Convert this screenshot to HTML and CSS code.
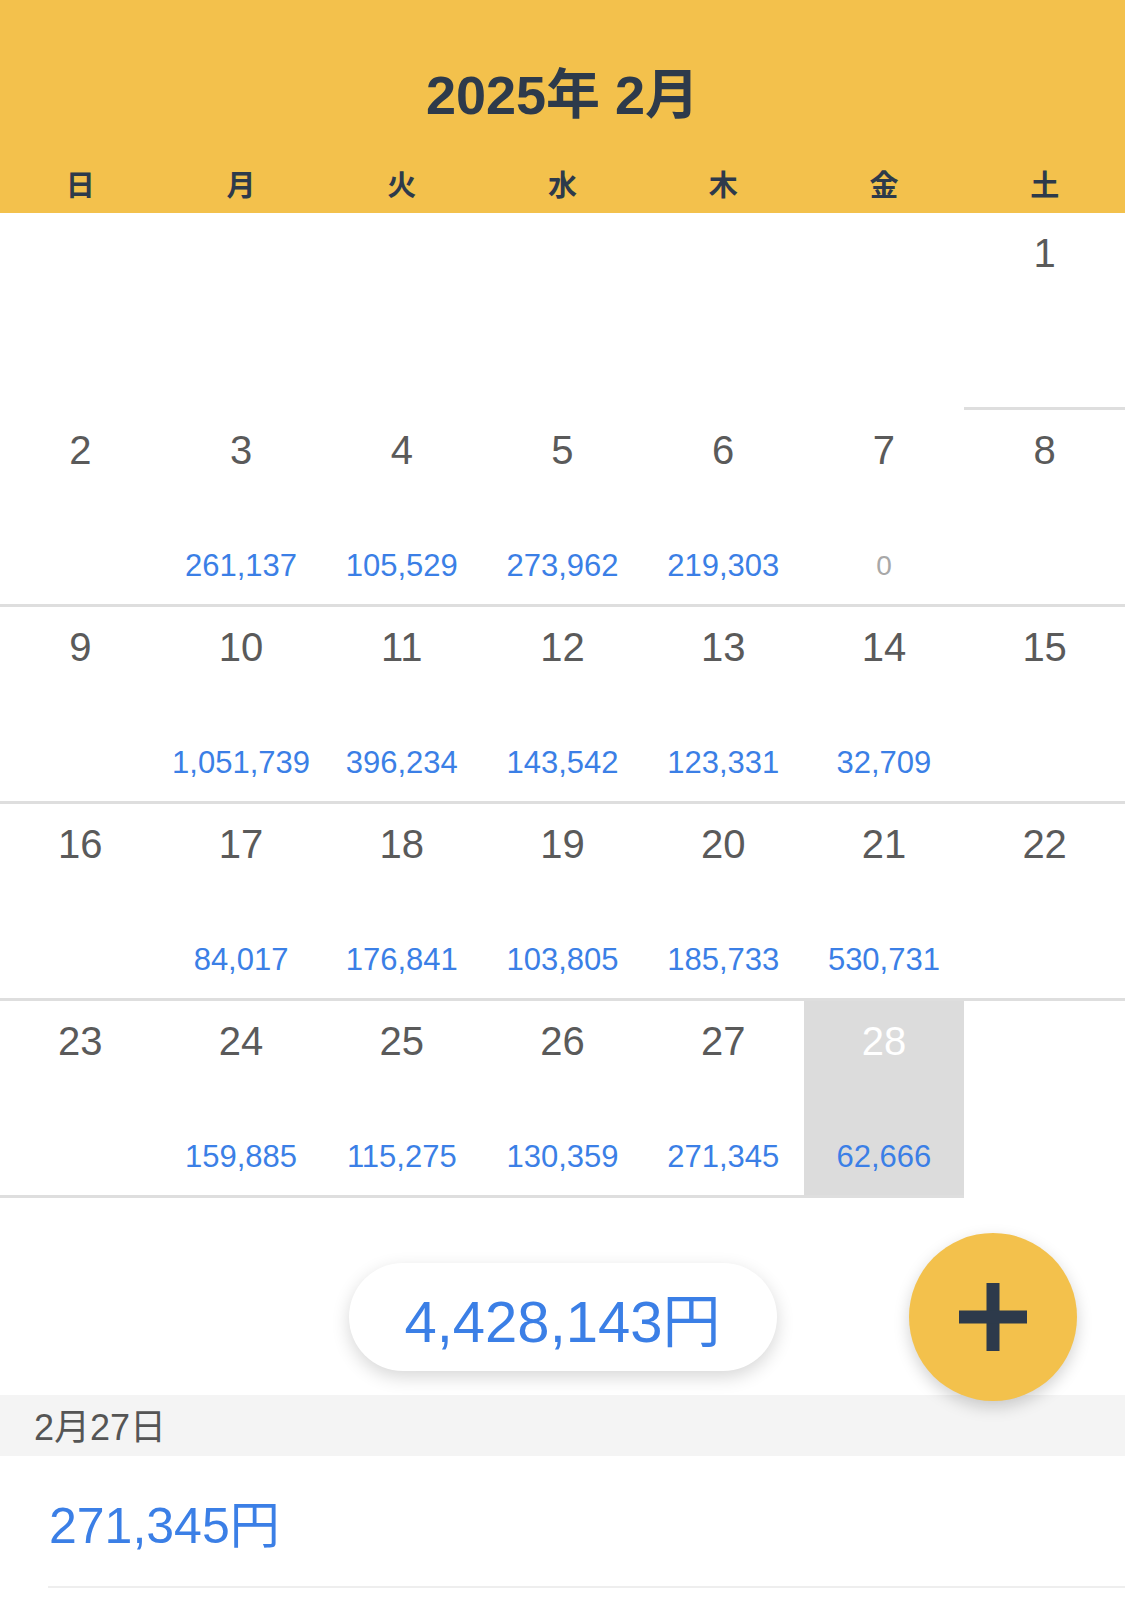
FILE: index.html
```html
<!DOCTYPE html>
<html lang="ja">
  <head>
    <meta charset="UTF-8" />
    <meta name="viewport" content="width=device-width, initial-scale=1" />
    <title>カレンダー</title>
    <link rel="stylesheet" href="styles.css">
  </head>
  <body>
    <div class="app">
      <header class="month-header">
        <h1 class="month-title">2025年 2月</h1>
        <div class="weekdays">
          <span>日</span>
          <span>月</span>
          <span>火</span>
          <span>水</span>
          <span>木</span>
          <span>金</span>
          <span>土</span>
        </div>
      </header>

      <div class="calendar">
        <div class="day empty"></div>
        <div class="day empty"></div>
        <div class="day empty"></div>
        <div class="day empty"></div>
        <div class="day empty"></div>
        <div class="day empty"></div>
        <div class="day"><span class="day-num">1</span><span class="day-amount"></span></div>

        <div class="day"><span class="day-num">2</span><span class="day-amount"></span></div>
        <div class="day"><span class="day-num">3</span><span class="day-amount">261,137</span></div>
        <div class="day"><span class="day-num">4</span><span class="day-amount">105,529</span></div>
        <div class="day"><span class="day-num">5</span><span class="day-amount">273,962</span></div>
        <div class="day"><span class="day-num">6</span><span class="day-amount">219,303</span></div>
        <div class="day"><span class="day-num">7</span><span class="day-amount zero">0</span></div>
        <div class="day"><span class="day-num">8</span><span class="day-amount"></span></div>

        <div class="day"><span class="day-num">9</span><span class="day-amount"></span></div>
        <div class="day"><span class="day-num">10</span><span class="day-amount">1,051,739</span></div>
        <div class="day"><span class="day-num">11</span><span class="day-amount">396,234</span></div>
        <div class="day"><span class="day-num">12</span><span class="day-amount">143,542</span></div>
        <div class="day"><span class="day-num">13</span><span class="day-amount">123,331</span></div>
        <div class="day"><span class="day-num">14</span><span class="day-amount">32,709</span></div>
        <div class="day"><span class="day-num">15</span><span class="day-amount"></span></div>

        <div class="day"><span class="day-num">16</span><span class="day-amount"></span></div>
        <div class="day"><span class="day-num">17</span><span class="day-amount">84,017</span></div>
        <div class="day"><span class="day-num">18</span><span class="day-amount">176,841</span></div>
        <div class="day"><span class="day-num">19</span><span class="day-amount">103,805</span></div>
        <div class="day"><span class="day-num">20</span><span class="day-amount">185,733</span></div>
        <div class="day"><span class="day-num">21</span><span class="day-amount">530,731</span></div>
        <div class="day"><span class="day-num">22</span><span class="day-amount"></span></div>

        <div class="day"><span class="day-num">23</span><span class="day-amount"></span></div>
        <div class="day"><span class="day-num">24</span><span class="day-amount">159,885</span></div>
        <div class="day"><span class="day-num">25</span><span class="day-amount">115,275</span></div>
        <div class="day"><span class="day-num">26</span><span class="day-amount">130,359</span></div>
        <div class="day"><span class="day-num">27</span><span class="day-amount">271,345</span></div>
        <div class="day today"><span class="day-num">28</span><span class="day-amount">62,666</span></div>
        <div class="day empty"></div>
      </div>

      <div class="summary">
        <div class="total-pill">4,428,143円</div>
        <button class="add-button" type="button" aria-label="追加">
          <svg width="68" height="68" viewBox="0 0 68 68">
            <rect x="27.5" y="0" width="13" height="68" fill="#2d3a4b" />
            <rect x="0" y="27.5" width="68" height="13" fill="#2d3a4b" />
          </svg>
        </button>
      </div>

      <div class="section-date">2月27日</div>
      <div class="entry">
        <div class="entry-inner">271,345円</div>
      </div>
    </div>
  </body>
</html>
```

FILE: styles.css
```css
body {
  margin: 0;
  font-family: "Liberation Sans", "Noto Sans CJK JP", sans-serif;
  background: #fff;
}
.app {
  width: 1125px;
  height: 1614px;
  overflow: hidden;
  position: relative;
}

/* month header */
.month-header {
  background-color: #f3c14c;
  height: 213px;
  box-sizing: border-box;
  padding-top: 63px;
}
.month-title {
  margin: 0;
  color: #2d3a4b;
  font-size: 54px;
  line-height: 64px;
  height: 64px;
  font-weight: bold;
  text-align: center;
}
.weekdays {
  display: grid;
  grid-template-columns: repeat(7, 1fr);
  margin-top: 44px;
  color: #2d3a4b;
  font-size: 29px;
  font-weight: bold;
  line-height: 30px;
  text-align: center;
}

/* month grid */
.calendar {
  display: grid;
  grid-template-columns: repeat(7, 1fr);
  grid-auto-rows: 197px;
}
.day {
  box-sizing: border-box;
  border-bottom: 3px solid #dedede;
  padding: 16px 0 20px;
  display: flex;
  flex-direction: column;
  justify-content: space-between;
  align-items: center;
}
.day.empty {
  border-bottom: none;
}
.day.today {
  background-color: #dcdcdc;
}
.day-num {
  font-size: 40px;
  line-height: 48px;
  color: #5a5a5a;
}
.day.today .day-num {
  color: #fff;
}
.day-amount {
  font-size: 31px;
  line-height: 36px;
  height: 36px;
  color: #3b7fe6;
}
.day-amount.zero {
  color: #a8a8a8;
  font-size: 28px;
}

/* total + add button */
.summary {
  height: 197px;
  display: flex;
  justify-content: center;
  align-items: center;
  position: relative;
}
.total-pill {
  width: 428px;
  height: 108px;
  border-radius: 54px;
  background: #fff;
  box-shadow: 0 6px 18px rgba(0, 0, 0, 0.16);
  display: flex;
  justify-content: center;
  align-items: center;
  font-size: 58px;
  color: #3b7fe6;
  margin-top: 40px;
}
.add-button {
  position: absolute;
  top: 35px;
  right: 48px;
  width: 168px;
  height: 168px;
  border: none;
  border-radius: 50%;
  background-color: #f3c14c;
  box-shadow: 0 6px 16px rgba(0, 0, 0, 0.18);
  display: flex;
  justify-content: center;
  align-items: center;
  padding: 0;
  z-index: 2;
  cursor: pointer;
}

/* selected day detail */
.section-date {
  height: 61px;
  box-sizing: border-box;
  background-color: #f4f4f4;
  padding: 5px 0 0 34px;
  font-size: 36px;
  line-height: 56px;
  color: #555;
}
.entry {
  padding-left: 48px;
}
.entry-inner {
  padding: 40px 0 30px 1px;
  border-bottom: 2px solid #eeeeee;
  font-size: 50px;
  line-height: 60px;
  color: #3b7fe6;
}
```
